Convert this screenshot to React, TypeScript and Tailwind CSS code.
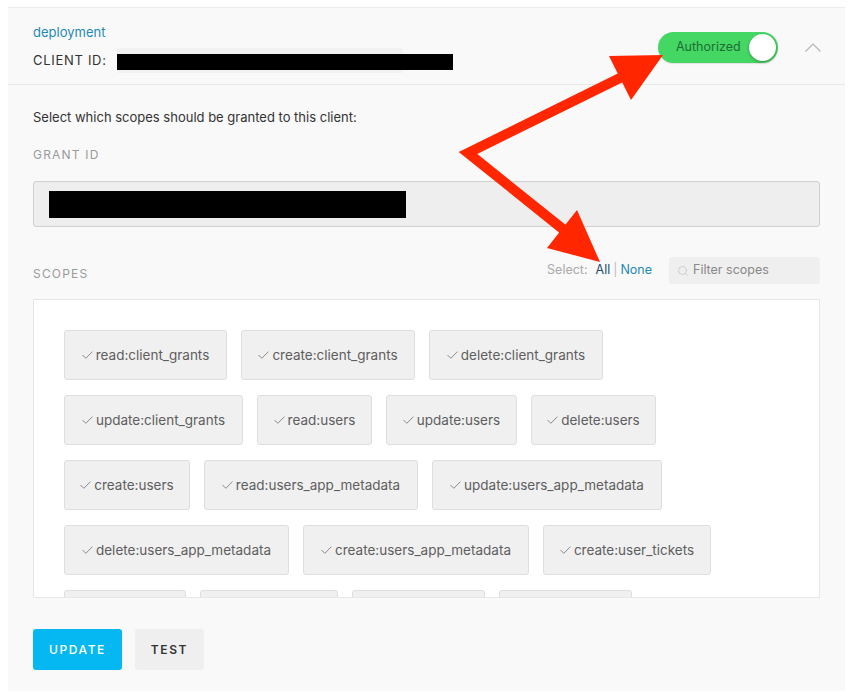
import React from "react";
import { Search } from "lucide-react";

const scopes = [
  { name: "read:client_grants", w: "w-[163px]" },
  { name: "create:client_grants", w: "w-[174px]" },
  { name: "delete:client_grants", w: "w-[174px]" },
  { name: "update:client_grants", w: "w-[179px]" },
  { name: "read:users", w: "w-[115px]" },
  { name: "update:users", w: "w-[131px]" },
  { name: "delete:users", w: "w-[125px]" },
  { name: "create:users", w: "w-[126px]" },
  { name: "read:users_app_metadata", w: "w-[214px]" },
  { name: "update:users_app_metadata", w: "w-[230px]" },
  { name: "delete:users_app_metadata", w: "w-[225px]" },
  { name: "create:users_app_metadata", w: "w-[226px]" },
  { name: "create:user_tickets", w: "w-[168px]" },
  { name: "read:clients", w: "w-[122px]" },
  { name: "update:clients", w: "w-[138px]" },
  { name: "delete:clients", w: "w-[133px]" },
  { name: "create:clients", w: "w-[133px]" },
];

const Check = () => (
  <svg width="11" height="8" viewBox="0 0 11 8" className="shrink-0">
    <polyline
      points="0.5,4 3.8,7.3 10.5,0.6"
      fill="none"
      stroke="#8a8a8a"
      strokeWidth="1"
    />
  </svg>
);

const ScopeChip = ({ name, w }: { name: string; w: string }) => (
  <div
    className={`${w} h-[50px] flex items-center justify-center gap-[3px] bg-[#f0f0f0] border border-[#dedede] rounded-[3px] text-[13.5px] text-[#5e5e5e]`}
  >
    <Check />
    <span>{name}</span>
  </div>
);

const Arrows = () => (
  <svg
    width="858"
    height="698"
    className="absolute left-0 top-0 pointer-events-none"
  >
    <polyline
      points="622,77 468,153 564,230"
      fill="none"
      stroke="#ff2600"
      strokeWidth="10"
      strokeLinejoin="miter"
    />
    <polygon points="663,55 609,56 631,100" fill="#ff2600" />
    <polygon points="600,262 547,248 577,210" fill="#ff2600" />
  </svg>
);

const App = () => {
  return (
    <div
      className="relative min-h-[698px] bg-white pt-[7px] pl-2"
      style={{ fontFamily: "Inter, 'Liberation Sans', sans-serif" }}
    >
      <div className="w-[837px] bg-[#f9f9f9] border-t border-[#ececec]">
        {/* header */}
        <div className="flex items-center justify-between pl-[25px] pr-[24px] pt-[14px] pb-[11px] border-b border-[#e8e8e8]">
          <div className="flex flex-col">
            <span className="text-[13px] leading-[20px] text-[#1f8ab6]">
              deployment
            </span>
            <div className="mt-[6px] flex items-center h-[25px]">
              <span className="text-[13px] tracking-[0.7px] text-[#333] w-[84px]">
                CLIENT ID:
              </span>
              <div className="relative h-[25px] w-[286px] bg-[#f2f2f2] rounded-[2px]">
                <div className="absolute left-0 top-[6px] h-[16px] w-[336px] bg-black" />
              </div>
            </div>
          </div>
          <div className="flex items-center gap-[27px]">
            <div className="flex items-center h-[31px] w-[120px] rounded-full bg-[#45d764] pl-[18px] pr-[2px] justify-between shadow-[0_1px_1px_rgba(0,0,0,0.1)]">
              <span className="text-[12.5px] text-[#1d6e34]">Authorized</span>
              <div className="h-[27px] w-[27px] rounded-full bg-white shadow-[0_1px_3px_rgba(0,0,0,0.35)]" />
            </div>
            <svg width="16" height="9" viewBox="0 0 16 9">
              <polyline
                points="0.5,8.5 8,1 15.5,8.5"
                fill="none"
                stroke="#b5b5b5"
                strokeWidth="1.2"
              />
            </svg>
          </div>
        </div>

        {/* body */}
        <div className="px-[25px] pt-[22px] pb-[21px]">
          <p className="text-[13px] leading-[20px] text-[#333]">
            Select which scopes should be granted to this client:
          </p>
          <p className="mt-[20px] text-[12px] leading-[16px] tracking-[1.2px] text-[#999]">
            GRANT ID
          </p>
          <div className="mt-[18px] h-[46px] w-[787px] bg-[#eeeeee] border border-[#cfcfcf] rounded-[3px] flex items-center pl-[15px]">
            <div className="h-[27px] w-[357px] bg-black" />
          </div>

          <div className="mt-[30px] flex items-center justify-between w-[787px] h-[27px]">
            <span className="mt-[6px] text-[12px] tracking-[1.2px] text-[#999]">
              SCOPES
            </span>
            <div className="flex items-center">
              <span className="text-[12.5px] text-[#aaa]">Select:</span>
              <span className="ml-[8px] text-[12.5px] text-[#1c4f68]">All</span>
              <span className="mx-[3px] text-[12.5px] text-[#bbb]">|</span>
              <span className="text-[12.5px] text-[#1f8ab6]">None</span>
              <div className="ml-[17px] h-[27px] w-[151px] bg-[#efefef] rounded-[3px] flex items-center pl-[8px] gap-[4px]">
                <Search size={12} strokeWidth={1.5} color="#c2c2c2" />
                <span className="text-[12.5px] text-[#888]">Filter scopes</span>
              </div>
            </div>
          </div>

          <div className="mt-[15px] h-[299px] w-[787px] bg-white border border-[#e6e6e6] overflow-hidden p-[30px]">
            <div className="flex flex-wrap gap-x-[14px] gap-y-[15px]">
              {scopes.map((s) => (
                <ScopeChip key={s.name} name={s.name} w={s.w} />
              ))}
            </div>
          </div>

          <div className="mt-[31px] flex gap-[13px]">
            <button className="h-[41px] w-[89px] rounded-[3px] bg-[#05b8f2] text-white text-[12px] font-medium tracking-[1.6px]">
              UPDATE
            </button>
            <button className="h-[41px] w-[69px] rounded-[3px] bg-[#efefef] text-[#333] text-[12px] font-semibold tracking-[1.6px]">
              TEST
            </button>
          </div>
        </div>
      </div>
      <Arrows />
    </div>
  );
};

export default App;
